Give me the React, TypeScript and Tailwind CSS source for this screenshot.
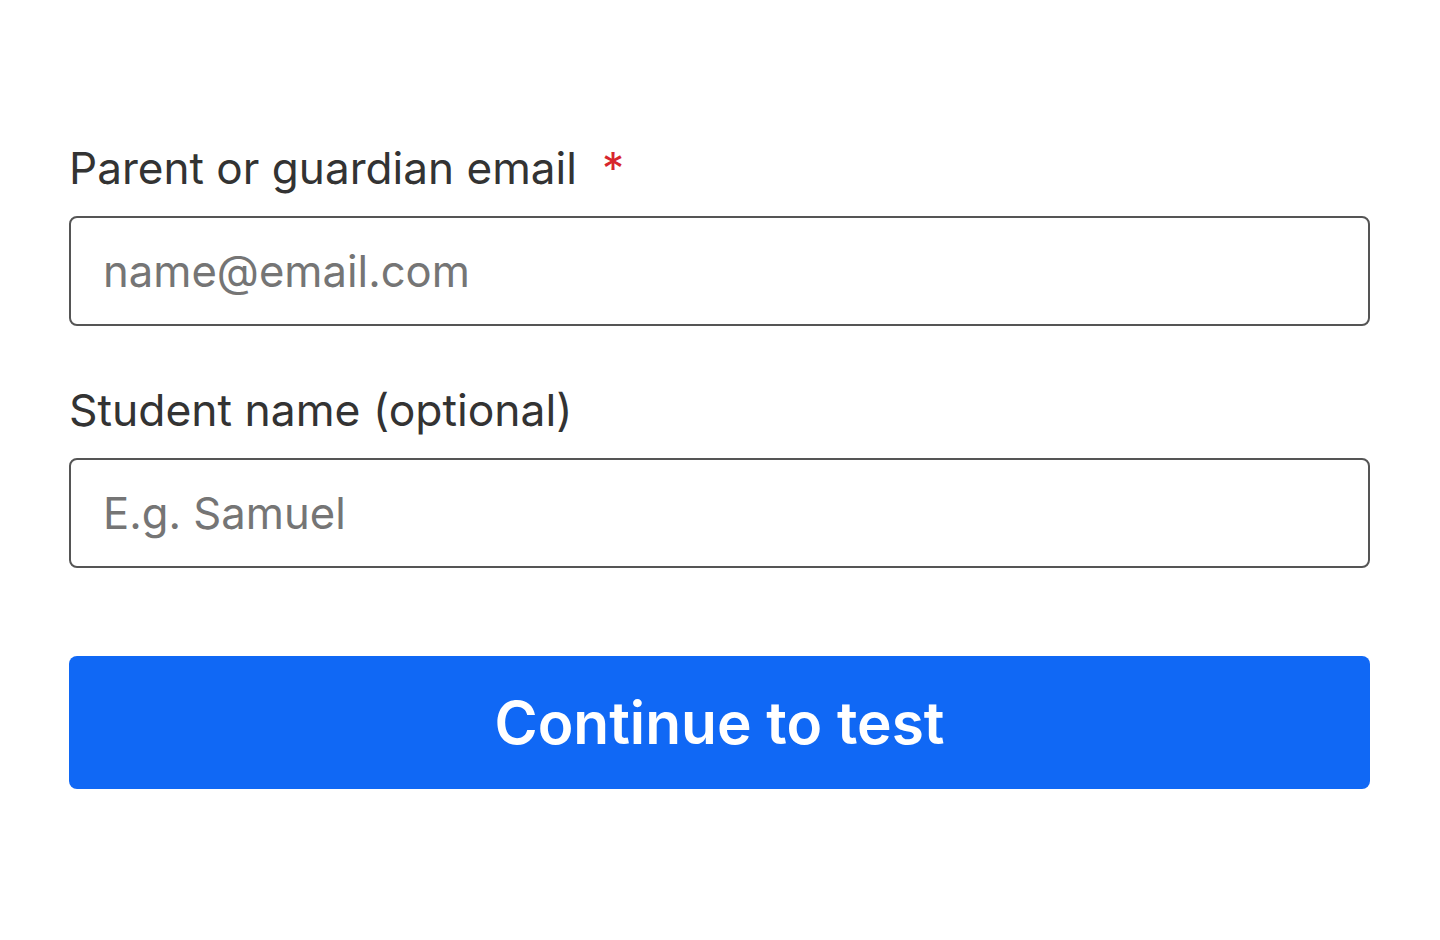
export default function App() {
  return (
    <div
      className="min-h-screen bg-white pl-[69px] pr-[70px] pt-[135px]"
      style={{ fontFamily: "Inter, 'Noto Sans', sans-serif" }}
    >
      <form className="flex flex-col" onSubmit={(e) => e.preventDefault()}>
        <label htmlFor="email" className="text-[44.1px] leading-[66px] text-[#333333]">
          Parent or guardian email
          <span className="ml-[25px] text-[#d7262d]">*</span>
        </label>
        <input
          id="email"
          type="email"
          placeholder="name@email.com"
          className="mt-[15px] h-[110px] w-full rounded-lg border-2 border-[#555555] pl-[32px] pr-8 text-[43.6px] text-[#333333] outline-none placeholder:text-[#757575]"
        />

        <label htmlFor="student" className="mt-[51px] text-[44.4px] leading-[66px] text-[#333333]">
          Student name (optional)
        </label>
        <input
          id="student"
          type="text"
          placeholder="E.g. Samuel"
          className="mt-[15px] h-[110px] w-full rounded-lg border-2 border-[#555555] pl-[32px] pr-8 text-[43.6px] text-[#333333] outline-none placeholder:text-[#757575]"
        />

        <button
          type="submit"
          className="mt-[88px] h-[133px] w-full rounded-lg bg-[#1068f5] text-[58.6px] font-semibold text-white"
        >
          Continue to test
        </button>
      </form>
    </div>
  );
}
